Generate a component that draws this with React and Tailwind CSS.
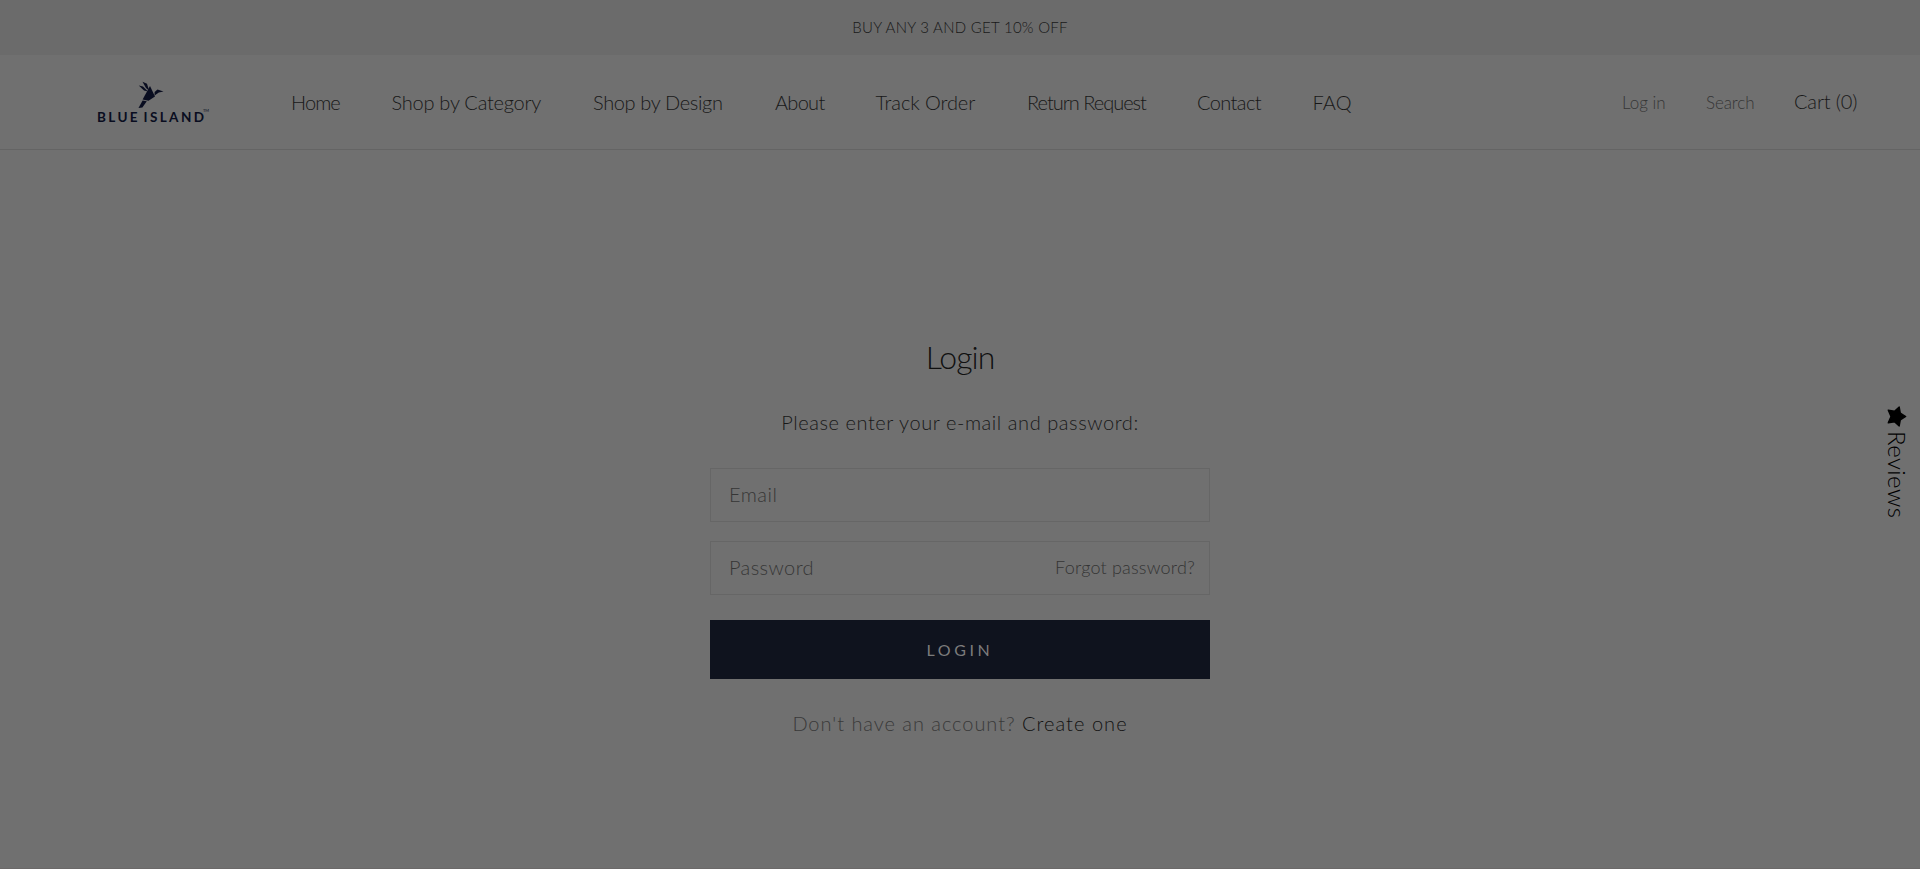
const NAV = [
  ["Home", "w-[100.5px] tracking-[-0.9px]"],
  ["Shop by Category", "w-[201.5px] tracking-[-0.25px]"],
  ["Shop by Design", "w-[182px] tracking-[-0.35px]"],
  ["About", "w-[100.5px] tracking-[-0.7px]"],
  ["Track Order", "w-[151.5px] tracking-[-0.1px]"],
  ["Return Request", "w-[170px] tracking-[-1px]"],
  ["Contact", "w-[115.5px] tracking-[-0.6px]"],
  ["FAQ", "w-[42px] tracking-[0.1px]"],
];

function Logo() {
  return (
    <a href="#" className="box-content flex w-[194px] shrink-0 flex-col pt-px pl-[97px] text-[#090d20]">
      <svg className="ml-[41px] h-[28px] w-[26px]" viewBox="0 0 26 28" fill="currentColor" aria-hidden="true">
        <path d="M4.5 0.8 L9 2.8 L11.2 9.8 L8 7 Z" />
        <path d="M0.8 4.4 L5 5.4 L10 10.4 L6 9.6 Z" />
        <path d="M12 5 L17 15.5 L10.5 19.8 L4.6 18.5 Z" />
        <path d="M16.6 14.5 L16.6 11 L19.5 8.6 L25.5 10.4 L20.8 11.4 Z" />
        <path d="M4.6 19.5 L8.8 20.3 L4.4 26.4 L0.5 27 Z" />
      </svg>
      <span className="flex text-[13.5px] leading-[16px] font-bold">
        <span className="w-[46.5px] tracking-[2.4px]">BLUE</span>
        <span className="w-[60.5px] tracking-[2.4px]">ISLAND</span>
        <span className="h-[5px] -translate-x-px -translate-y-px text-[4px] leading-[5px] font-normal">TM</span>
      </span>
    </a>
  );
}

export default function App() {
  return (
    <div className="relative flex h-[869px] flex-col overflow-hidden border-b border-[#6b6969] bg-[#707070] font-['Lato',sans-serif] font-light text-[#181818]">
      <div className="flex h-[55px] shrink-0 items-center justify-center bg-[#6b6b6b] text-[15px]">
        <p className="tracking-[0.27px]">BUY ANY 3 AND GET 10% OFF</p>
      </div>

      <header className="flex h-[95px] shrink-0 items-center border-b border-[#646464]">
        <Logo />
        <nav className="-mt-px flex text-[20px] leading-[24px] whitespace-nowrap">
          {NAV.map(([label, style]) => (
            <a key={label} href="#" className={style}>{label}</a>
          ))}
        </nav>
        <div className="ml-auto flex items-baseline pr-[62px] text-[17px] leading-[24px] whitespace-nowrap text-[#363636]">
          <a href="#" className="w-[84px]">Log in</a>
          <a href="#" className="w-[88px] tracking-[-0.1px]">Search</a>
          <a href="#" className="w-[64px] text-[20px] tracking-[-0.15px] text-[#181818]">Cart (0)</a>
        </div>
      </header>

      <main className="mx-auto flex w-[500px] flex-col pt-[187px]">
        <h1 className="text-center text-[32px] leading-[40px] tracking-[-1px] text-[#101010]">Login</h1>
        <p className="mt-[31px] text-center text-[20px] leading-[28px] tracking-[0.57px]">Please enter your e-mail and password:</p>
        <input
          type="email"
          placeholder="Email"
          className="mt-[32px] h-[54px] border border-[#666666] bg-transparent px-[18px] pb-[2px] text-[20px] tracking-[0.5px] outline-none placeholder:text-[#363636]"
        />
        <div className="mt-[19px] flex h-[54px] items-center border border-[#666666] pr-[14px] pb-[2px] pl-[18px]">
          <input
            type="password"
            placeholder="Password"
            className="min-w-0 flex-1 bg-transparent text-[20px] tracking-[0.4px] outline-none placeholder:text-[#363636]"
          />
          <a href="#" className="text-[18px] tracking-[0.2px] text-[#343434]">Forgot password?</a>
        </div>
        <button className="mt-[25px] h-[59px] bg-[#0f131e] pt-px text-[16px] font-normal tracking-[3.6px] text-[#7c7c7c]">LOGIN</button>
        <p className="mt-[30px] text-center text-[20px] leading-[28px] whitespace-nowrap text-[#393939]">
          <span className="tracking-[0.95px]">Don't have an account? </span>
          <a href="#" className="tracking-[1.05px] text-[#121212]">Create one</a>
        </p>
      </main>

      <a href="#" className="absolute top-[406px] left-[1881px] flex w-[32px] flex-col items-center gap-[4px] text-black">
        <svg className="h-[21px] w-[20px]" viewBox="0 0 19 21" fill="currentColor" stroke="currentColor" strokeWidth="1.4" strokeLinejoin="round" aria-hidden="true">
          <path d="M18.2 10.5 L12.8 13.8 L11.7 20 L7 15.8 L0.8 16.8 L3.5 10.5 L0.8 4.2 L7 5.2 L11.7 1 L12.8 7.2 Z" />
        </svg>
        <span className="text-[24px] leading-[32px] tracking-[0.4px] [writing-mode:vertical-rl]">Reviews</span>
      </a>
    </div>
  );
}
